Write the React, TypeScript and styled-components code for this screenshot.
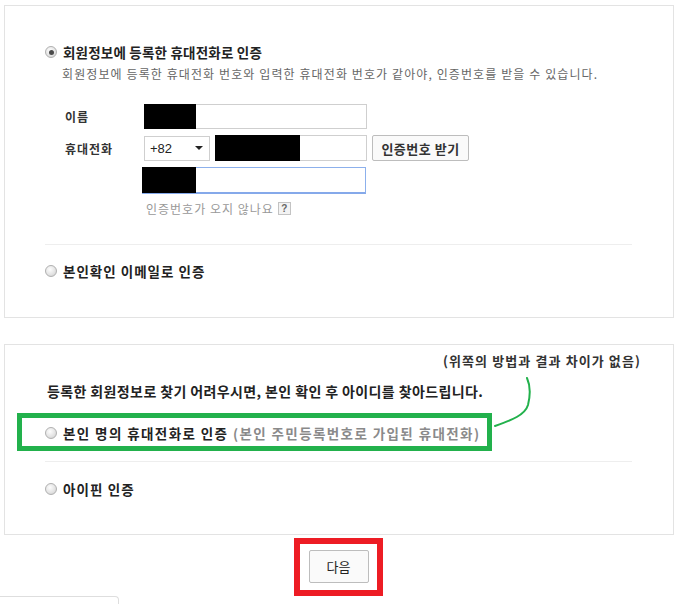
import * as React from 'react';
import styled, { createGlobalStyle } from 'styled-components';

const GlobalStyle = createGlobalStyle`
  html, body { margin: 0; padding: 0; background: #fff; }
  body {
    font-family: "Noto Sans CJK KR", "Liberation Sans", sans-serif;
    color: #333;
    width: 677px;
    overflow: hidden;
  }
`;

const Panel = styled.div<{ $top: number; $pt: number; $pb: number }>`
  position: relative;
  margin: ${p => p.$top}px 3px 0 4px;
  padding: ${p => p.$pt}px 41px ${p => p.$pb}px 40px;
  border: 1px solid #e3e3e3;
`;

const OptionRow = styled.div<{ $mt?: number; $ls?: number }>`
  position: relative;
  display: flex;
  align-items: center;
  gap: 6px;
  height: 20px;
  margin-top: ${p => p.$mt || 0}px;
  font-size: 13.5px;
  font-weight: bold;
  color: #222;
  letter-spacing: ${p => p.$ls ?? 0}px;
  white-space: nowrap;
`;

const Radio = styled.span<{ $checked?: boolean }>`
  position: relative;
  width: 10px;
  height: 10px;
  border-radius: 50%;
  border: 1px solid #b0b0b0;
  background: radial-gradient(circle at 40% 35%, #fdfdfd 0%, #e2e2e2 60%, #c8c8c8 100%);
  flex: none;
  &::after {
    content: '';
    display: ${p => (p.$checked ? 'block' : 'none')};
    position: absolute;
    left: 2.5px;
    top: 2.5px;
    width: 5px;
    height: 5px;
    border-radius: 50%;
    background: #4a4a4a;
  }
`;

const Muted = styled.span`
  color: #8a8a8a;
  font-weight: bold;
`;

const Desc = styled.div`
  margin: 3px 0 0 17px;
  font-size: 12px;
  line-height: 18px;
  color: #666;
  letter-spacing: 1.1px;
  white-space: nowrap;
`;

const Form = styled.div`
  margin: 21px 0 0 20px;
  display: grid;
  grid-template-columns: 79px auto;
  row-gap: 6px;
  align-items: center;
`;

const FieldLabel = styled.div`
  font-size: 12px;
  font-weight: bold;
  color: #333;
  letter-spacing: 1px;
`;

const Line = styled.div`
  display: flex;
  align-items: center;
  gap: 5px;
`;

const TextBox = styled.div<{ $w: number; $h: number; $mask: number; $focus?: boolean; $shift?: number }>`
  position: relative;
  box-sizing: border-box;
  width: ${p => p.$w}px;
  height: ${p => p.$h}px;
  border: 1px solid ${p => (p.$focus ? '#8cb0ec' : '#cfcfcf')};
  border-bottom: ${p => (p.$focus ? '2px solid #85a9ea' : '1px solid #cfcfcf')};
  background: #fff;
  margin-left: ${p => p.$shift || 0}px;
  &::before {
    content: '';
    position: absolute;
    left: -1px;
    top: -1px;
    bottom: -1px;
    width: ${p => p.$mask}px;
    background: #000;
  }
`;

const Select = styled.div`
  box-sizing: border-box;
  width: 66px;
  height: 25px;
  border: 1px solid #cfcfcf;
  display: flex;
  align-items: center;
  justify-content: space-between;
  padding: 0 6px 0 5px;
  font-family: "Liberation Sans", sans-serif;
  font-size: 13px;
  color: #222;
`;

const Caret = styled.span`
  width: 0;
  height: 0;
  border-left: 4px solid transparent;
  border-right: 4px solid transparent;
  border-top: 4px solid #222;
`;

const SmallButton = styled.button`
  box-sizing: border-box;
  height: 26px;
  width: 97px;
  padding: 0;
  border: 1px solid #bdbdbd;
  border-radius: 2px;
  background: #fafafa;
  font-family: inherit;
  font-size: 13px;
  font-weight: bold;
  color: #333;
  letter-spacing: 0.5px;
`;

const Help = styled.div`
  display: flex;
  align-items: center;
  gap: 4px;
  margin: 6px 0 0 101px;
  height: 16px;
  font-size: 12px;
  color: #999;
  letter-spacing: 1px;
`;

const HelpMark = styled.span`
  box-sizing: border-box;
  width: 13px;
  height: 13px;
  border: 1px solid #c3c3c3;
  background: #f3f3f3;
  font-family: "Liberation Sans", sans-serif;
  font-size: 10px;
  font-weight: bold;
  color: #666;
  letter-spacing: 0;
  display: flex;
  align-items: center;
  justify-content: center;
`;

const Divider = styled.div<{ $mt: number }>`
  height: 1px;
  background: #eeeeee;
  margin-top: ${p => p.$mt}px;
`;

const Note = styled.div`
  display: flex;
  justify-content: flex-end;
  margin-right: -9px;
  height: 16px;
  line-height: 16px;
  font-size: 13px;
  font-weight: bold;
  color: #333;
  letter-spacing: 1.1px;
`;

const Info = styled.div`
  margin: 12px 0 0 2px;
  height: 20px;
  line-height: 20px;
  font-size: 14px;
  font-weight: bold;
  color: #222;
  letter-spacing: 0.38px;
  white-space: nowrap;
`;

const GreenMark = styled.div`
  position: absolute;
  left: -28px;
  top: -10px;
  width: 475px;
  height: 38px;
  box-sizing: border-box;
  border: 5px solid #22b14c;
  pointer-events: none;
`;

const Curve = styled.svg`
  position: absolute;
  left: 485px;
  top: 30px;
  overflow: visible;
`;

const Footer = styled.div`
  display: flex;
  justify-content: center;
  margin-top: 3px;
`;

const RedMark = styled.div`
  box-sizing: border-box;
  width: 89px;
  height: 58px;
  border: 6px solid #ed1c24;
  display: flex;
  align-items: center;
  justify-content: center;
  padding-bottom: 2px;
`;

const NextButton = styled.button`
  box-sizing: border-box;
  width: 60px;
  height: 33px;
  border: 1px solid #bdbdbd;
  border-radius: 2px;
  background: #fafafa;
  font-family: inherit;
  font-size: 13px;
  color: #222;
`;

const Tab = styled.div`
  width: 118px;
  height: 12px;
  border-top: 1px solid #dedede;
  border-right: 1px solid #dedede;
  border-top-right-radius: 4px;
`;

export default function App() {
  return (
    <>
      <GlobalStyle />
      <Panel $top={5} $pt={36} $pb={36}>
        <OptionRow $ls={0.2}>
          <Radio $checked />
          회원정보에 등록한 휴대전화로 인증
        </OptionRow>
        <Desc>회원정보에 등록한 휴대전화 번호와 입력한 휴대전화 번호가 같아야, 인증번호를 받을 수 있습니다.</Desc>
        <Form>
          <FieldLabel>이름</FieldLabel>
          <TextBox $w={223} $h={25} $mask={52} />
          <FieldLabel>휴대전화</FieldLabel>
          <Line>
            <Select>
              +82
              <Caret />
            </Select>
            <TextBox $w={152} $h={26} $mask={85} />
            <SmallButton>인증번호 받기</SmallButton>
          </Line>
          <span />
          <TextBox $w={224} $h={27} $mask={54} $focus $shift={-2} />
        </Form>
        <Help>
          인증번호가 오지 않나요
          <HelpMark>?</HelpMark>
        </Help>
        <Divider $mt={28} />
        <OptionRow $mt={16} $ls={1}>
          <Radio />
          본인확인 이메일로 인증
        </OptionRow>
      </Panel>

      <Panel $top={26} $pt={8} $pb={35}>
        <Note>(위쪽의 방법과 결과 차이가 없음)</Note>
        <Curve width="50" height="55" viewBox="0 0 50 55">
          <path
            d="M37 3 C41 12, 40 22, 38 30 C35 40, 22 45, 5 51"
            fill="none"
            stroke="#22b14c"
            strokeWidth="2"
            strokeLinecap="round"
          />
        </Curve>
        <Info>등록한 회원정보로 찾기 어려우시면, 본인 확인 후 아이디를 찾아드립니다.</Info>
        <OptionRow $mt={22} $ls={1.4}>
          <GreenMark />
          <Radio />
          <span>
            본인 명의 휴대전화로 인증 <Muted>(본인 주민등록번호로 가입된 휴대전화)</Muted>
          </span>
        </OptionRow>
        <Divider $mt={18} />
        <OptionRow $mt={17} $ls={1.1}>
          <Radio />
          아이핀 인증
        </OptionRow>
      </Panel>

      <Footer>
        <RedMark>
          <NextButton>다음</NextButton>
        </RedMark>
      </Footer>
      <Tab />
    </>
  );
}
